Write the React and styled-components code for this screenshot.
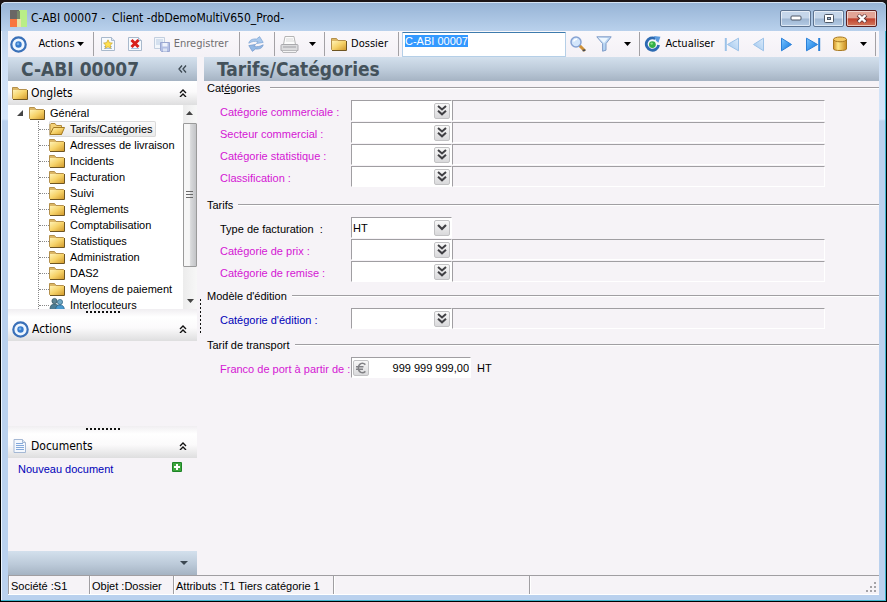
import React from "react";
import styled, { createGlobalStyle, css } from "styled-components";

const ui = '"DejaVu Sans Condensed", "DejaVu Sans", sans-serif';
const form = '"Liberation Sans", Arial, sans-serif';

const GlobalStyle = createGlobalStyle`
  * { box-sizing: border-box; }
  body { margin: 0; background: #1c1517; color: #000; font: 11px/14px ${form}; }
  button, input, select { font: inherit; color: inherit; margin: 0; }
  button { background: none; border: 0; padding: 0; white-space: nowrap; }
  svg { display: block; flex: none; }
  ul { list-style: none; margin: 0; padding: 0; }
`;

/* ---------- window ---------- */
const Window = styled.div`
  display: flex;
  flex-direction: column;
  min-height: 100vh;
  border: 1px solid #000;
  border-top: 2px solid #1c1517;
  border-radius: 6px 6px 0 0;
  padding: 0 7px 6px;
  background: linear-gradient(#b4cbe6 0, #cfe0f6 60px, #d4e5fa 117px, #bad1ee 119px, #bad1ee 100%);
  box-shadow: inset -1px -1px #3fb4cd, inset 1px 0 #eef6ff;
`;
const TitleBar = styled.header`
  display: flex;
  align-items: center;
  height: 29px;
  margin: 0 -7px;
  padding: 2px 9px 0;
  border-radius: 5px 5px 0 0;
  border-top: 1px solid #d5e4f4;
  background: linear-gradient(#97b4d6, #b9d1ec);
`;
const Title = styled.h1`
  flex: 1;
  margin: 0 0 0 4px;
  font: 12px/16px ${ui};
  white-space: pre;
`;
const Captions = styled.div`
  display: flex;
  gap: 2px;
`;
const CaptionButton = styled.button`
  display: grid;
  place-items: center;
  width: 31px;
  height: 17px;
  border: 1px solid #5d7390;
  border-radius: 2px;
  box-shadow: inset 0 0 0 1px #ffffff90;
  background: linear-gradient(#c5d6ea 0 48%, #9eb6d2 52%, #b4cbe5);
  ${(p) => p.$close && css`
    border-color: #5b1f21;
    background: linear-gradient(#e2a496 0 46%, #c0412d 52%, #d27a5e);
  `}
`;
const Client = styled.div`
  flex: 1;
  display: flex;
  flex-direction: column;
  background: #f6f3f7;
`;

/* ---------- toolbar ---------- */
const Toolbar = styled.div`
  display: flex;
  align-items: center;
  height: 26px;
  font: 11px/14px ${ui};
  background: linear-gradient(#faf8fb, #f4f1f6);
`;
const Tool = styled.button`
  display: flex;
  align-items: center;
  justify-content: center;
  gap: ${(p) => p.$gap || 4}px;
  flex: none;
  width: ${(p) => p.$w}px;
  height: 24px;
  &:disabled { color: #6f6d70; }
`;
const Separator = styled.span`
  flex: none;
  width: 1px;
  height: 24px;
  margin-left: ${(p) => p.$before || 0}px;
  background: #a3a1a5;
`;
const SearchBox = styled.input`
  flex: 0 1 164px;
  min-width: 60px;
  height: 25px;
  margin-left: 3px;
  padding: 0 2px 6px;
  border: 1px solid #b5cfe7;
  border-top-color: #3d7bad;
  border-radius: 1px;
  font: 11px/14px ${form};
  outline: 0;
  &::selection { background: #3399ff; color: #fff; }
`;

/* ---------- layout ---------- */
const Body = styled.div`
  flex: 1;
  display: flex;
`;
const Sidebar = styled.aside`
  flex: none;
  display: flex;
  flex-direction: column;
  width: 189px;
`;
const band = css`
  display: flex;
  align-items: center;
  height: 24px;
  background: linear-gradient(#d3e0ed, #bccad9 55%, #a5b3c3);
`;
const Band = styled.div`
  ${band}
  justify-content: space-between;
  padding: 0 10px 0 13px;
`;
const BandTitle = styled.h2`
  margin: 0;
  font: bold 19px/24px ${ui};
  color: #44525b;
`;
const FootBand = styled.div`
  ${band}
  justify-content: flex-end;
  padding-right: 9px;
`;
const PanelHeader = styled.div`
  display: flex;
  align-items: center;
  gap: 3px;
  height: 24px;
  padding: 0 10px 0 4px;
  background: linear-gradient(#fff, #fbfafb 45%, #dededf);
`;
const PanelTitle = styled.h3`
  flex: 1;
  margin: 0;
  font: 12px/16px ${ui};
`;
const PanelBody = styled.div`
  display: flex;
  align-items: flex-start;
  justify-content: space-between;
  flex: ${(p) => (p.$h ? `0 0 ${p.$h}px` : "1")};
  padding: 4px 15px 0 10px;
`;
const Link = styled.a`
  color: #0000b8;
  text-decoration: none;
`;
const Splitter = styled.div`
  display: flex;
  justify-content: center;
  height: 8px;
  padding-top: 2px;
  background: linear-gradient(#f0eef1, #fff);
  &::before {
    content: "";
    width: 34px;
    height: 2px;
    background: repeating-linear-gradient(90deg, #111 0 2px, transparent 2px 4px);
  }
`;
const Divider = styled.div`
  flex: none;
  display: flex;
  align-items: center;
  justify-content: center;
  width: 7px;
  &::before {
    content: "";
    width: 1px;
    height: 34px;
    background: repeating-linear-gradient(#111 0 2px, transparent 2px 4px);
  }
`;

/* ---------- tree ---------- */
const TreePane = styled.div`
  display: flex;
  height: 204px;
  background: #fff;
`;
const Tree = styled.div`
  flex: 1;
  overflow: hidden;
  padding-left: 8px;
`;
const TreeRoot = styled.div`
  display: flex;
  align-items: center;
  gap: 5px;
  height: 16px;
`;
const Branch = styled.ul`
  margin-left: 22px;
  border-left: 1px dotted #888;
`;
const Leaf = styled.li`
  display: flex;
  align-items: center;
  height: 16px;
  &::before {
    content: "";
    width: 10px;
    border-top: 1px dotted #888;
  }
`;
const LeafButton = styled.button`
  display: flex;
  align-items: center;
  gap: 3px;
  height: 16px;
  padding-right: 1px;
  border-radius: 2px;
  ${(p) => p.$on && css`
    background: linear-gradient(#fbfbfb, #e9e9e9);
    box-shadow: inset 0 0 0 1px #d9d9d9;
  `}
`;
const LeafText = styled.span`
  padding: 0 2px;
`;
const Scroll = styled.div`
  display: flex;
  flex-direction: column;
  align-items: center;
  justify-content: space-between;
  flex: none;
  width: 14px;
  padding: 6px 0;
  background: linear-gradient(90deg, #ececec, #f7f7f7);
`;
const Thumb = styled.div`
  display: grid;
  place-items: center;
  width: 14px;
  height: 144px;
  margin: 0 0 24px;
  border: 1px solid #9a9a9a;
  border-radius: 1px;
  background: linear-gradient(90deg, #f6f6f6 0 45%, #d9dadc 55%, #c3c4c7);
`;

/* ---------- form ---------- */
const Main = styled.main`
  flex: 1;
  min-width: 0;
`;
const Group = styled.section`
  padding-bottom: ${(p) => p.$after || 0}px;
`;
const Legend = styled.h3`
  display: flex;
  align-items: center;
  gap: ${(p) => p.$gap || 5}px;
  margin: 0 0 5px;
  padding-left: 3px;
  font: 11px/14px ${form};
  white-space: nowrap;
  &::after {
    content: "";
    flex: 1;
    height: 1px;
    background: #a09ea2;
    border-bottom: 1px solid #fff;
  }
`;
const Row = styled.div`
  display: flex;
  height: 22px;
  padding: 0 54px 0 16px;
`;
const Label = styled.label`
  flex: none;
  width: 131px;
  padding-top: 5px;
  white-space: pre;
  color: ${(p) => p.$color || "#000"};
`;
const sunken = css`
  border: 1px solid #fff;
  border-top-color: #a09ea2;
  border-left-color: #a09ea2;
`;
const Box = styled.div`
  ${sunken}
  flex: none;
  display: flex;
  align-items: center;
  width: ${(p) => p.$w || 101}px;
  height: 21px;
  padding: 0 1px;
  background: #fff;
`;
const Field = styled.input`
  flex: 1;
  width: 0;
  padding: 0;
  border: 0;
  background: none;
  outline: 0;
  text-align: ${(p) => p.$align || "left"};
`;
const Choice = styled.select`
  appearance: none;
  flex: 1;
  width: 0;
  padding: 0;
  border: 0;
  background: none;
  outline: 0;
`;
const SmallButton = styled.button`
  display: grid;
  place-items: center;
  flex: none;
  width: 16px;
  height: 16px;
  border: 1px solid #c2c2c4;
  border-radius: 2px;
  background: linear-gradient(#f8f8f8, #d9d9db);
`;
const Description = styled.output`
  ${sunken}
  flex: 1;
  min-width: 0;
  height: 21px;
`;
const Unit = styled.span`
  padding: 4px 0 0 6px;
`;

/* ---------- status bar ---------- */
const Status = styled.footer`
  display: flex;
  height: 20px;
  border-bottom: 1px solid #fff;
`;
const StatusCell = styled.div`
  display: flex;
  align-items: center;
  justify-content: ${(p) => (p.$w ? "flex-start" : "flex-end")};
  flex: ${(p) => (p.$w ? `0 0 ${p.$w}px` : "1")};
  padding: 1px 2px 0;
  border-top: 1px solid #a09ea2;
  border-left: 1px solid #a09ea2;
  box-shadow: inset 1px 0 #fff;
  white-space: nowrap;
`;

/* ---------- icons ---------- */
const Svg = ({ w = 16, h = 16, children }) => (
  <svg width={w} height={h} viewBox={`0 0 ${w} ${h}`} aria-hidden="true">{children}</svg>
);
const Defs = styled.svg`
  position: absolute;
`;
const Gradients = () => (
  <Defs width="0" height="0" aria-hidden="true">
    <defs>
      <linearGradient id="gold" x1="0" y1="0" x2="1" y2="1">
        <stop offset="0" stopColor="#fff2b4" /><stop offset=".5" stopColor="#f6d268" /><stop offset="1" stopColor="#d29b2e" />
      </linearGradient>
      <linearGradient id="blue" x1="0" y1="0" x2="1" y2="1">
        <stop offset="0" stopColor="#7cc6ff" /><stop offset="1" stopColor="#0a73de" />
      </linearGradient>
      <linearGradient id="pale" x1="0" y1="0" x2="1" y2="1">
        <stop offset="0" stopColor="#dcebfa" /><stop offset="1" stopColor="#9fc6ee" />
      </linearGradient>
      <linearGradient id="cyl" x1="0" y1="0" x2="1" y2="0">
        <stop offset="0" stopColor="#d0912a" /><stop offset=".35" stopColor="#ffe784" /><stop offset="1" stopColor="#c98a1e" />
      </linearGradient>
    </defs>
  </Defs>
);
const Logo = () => (
  <Svg w={17} h={17}>
    <rect width="9" height="9" fill="#6a6765" /><rect x="9" width="8" height="17" fill="#b9ee87" />
    <rect x="7" y="1" width="3" height="8" fill="#77886a" />
    <rect y="9" width="7" height="8" fill="#f8763f" /><rect x="7" y="9" width="4" height="8" fill="#e8e3a8" />
  </Svg>
);
const Target = () => (
  <Svg w={17} h={17}>
    <circle cx="8.5" cy="8.5" r="7.2" fill="#eef6ff" stroke="#3a70b8" strokeWidth="2.2" />
    <circle cx="8.5" cy="8.5" r="3.2" fill="#3579cb" /><circle cx="8" cy="7.9" r="1.4" fill="#72aee8" />
  </Svg>
);
const Caret = ({ color = "#000", w = 7 }) => (
  <Svg w={w} h={4}><path d={`M0 0H${w}L${w / 2} 4Z`} fill={color} /></Svg>
);
const Page = () => (
  <>
    <path d="M1.5 1.5H11.5L14.5 4.5V14.5H1.5Z" fill="#f7fafe" stroke="#a9b9cc" />
    <path d="M11.5 1.5V4.5H14.5" fill="#dce7f3" stroke="#a9b9cc" />
  </>
);
const NewIcon = () => (
  <Svg><Page /><path d="M4 12.5H12M4 10.5H12" stroke="#a8c2e0" />
    <path d="M8 3.8L9.4 6.7L12.4 7.1L10.2 9.2L10.8 12.3L8 10.8L5.2 12.3L5.8 9.2L3.6 7.1L6.6 6.7Z" fill="#ffe14f" stroke="#c9a22a" strokeWidth=".7" /></Svg>
);
const DeleteIcon = () => (
  <Svg><Page /><path d="M4 12.5H12" stroke="#a8c2e0" />
    <path d="M4.5 4L11.5 11M11.5 4L4.5 11" stroke="#d8201c" strokeWidth="3" /></Svg>
);
const SaveIcon = () => (
  <Svg>
    <path d="M.5 1.5H10.5V12.5H.5Z" fill="#f2f6fb" stroke="#c3cfdf" />
    <path d="M2 4H9M2 6H9M2 8H7" stroke="#b8cbe3" />
    <path d="M6.5 6.5H15.5V15.5H7.5L6.5 14.5Z" fill="#b3bfe4" stroke="#9aa7d0" />
    <path d="M8.5 7H13.5V10.5H8.5Z" fill="#eef2fb" /><path d="M9 12.5H13V15.5H9Z" fill="#dde4f4" />
  </Svg>
);
const RefreshIcon = () => (
  <Svg>
    <path d="M.8 7.2C1.4 4.2 4 2.6 8.6 3L11.6 .6L15.2 6.4L8.4 7.6L10 5.6C6.6 5 4 5.4 .8 7.2Z" fill="#a9c8ec" stroke="#7ba3d3" strokeWidth=".7" />
    <path d="M15.2 8.8C14.6 11.8 12 13.4 7.4 13L4.4 15.4L.8 9.6L7.6 8.4L6 10.4C9.4 11 12 10.6 15.2 8.8Z" fill="#93b8e4" stroke="#7097cc" strokeWidth=".7" />
  </Svg>
);
const PrinterIcon = () => (
  <Svg w={19} h={17}>
    <path d="M5 .5H14L15.5 8.5H3.5Z" fill="#fcfcfc" stroke="#b5b5b5" />
    <path d="M6 3H13M6 5H14" stroke="#dadada" />
    <path d="M1 9.5Q1 8.5 2 8.5H17Q18 8.5 18 9.5V14.5H1Z" fill="#dcdcde" stroke="#a9a9ad" />
    <path d="M3 11H16" stroke="#a0a0a5" /><path d="M2 14.5H17L16 16.5H3Z" fill="#f4f4f4" stroke="#b9b9bc" />
  </Svg>
);
const Folder = ({ open }) => open ? (
  <Svg>
    <path d="M1 13.5V3.5L2 2.5H6L7.5 4.5H12.5V13.5Z" fill="#f3d177" stroke="#b0883a" />
    <path d="M1 13.5L4.5 6.5H15.5L12.5 13.5Z" fill="url(#gold)" stroke="#a47a22" />
  </Svg>
) : (
  <Svg>
    <path d="M.5 13.5V2.5H5.5L7 4.5H14.5V13.5Z" fill="#dcb765" stroke="#b4904c" />
    <path d="M1 5H15V14H1Z" fill="url(#gold)" /><path d="M1 14.5H15.5V5" fill="none" stroke="#6e5522" />
  </Svg>
);
const SearchIcon = () => (
  <Svg>
    <path d="M10 10L14 14" stroke="#d09238" strokeWidth="3" strokeLinecap="round" /><path d="M12.6 14.6L15.4 14" stroke="#454a54" strokeWidth="1.6" />
    <circle cx="6" cy="6" r="5" fill="#d3e6fb" stroke="#86a2d2" strokeWidth="1.5" /><path d="M3.5 5.5Q4.5 3 7 3.2" stroke="#fff" strokeWidth="1.6" fill="none" />
  </Svg>
);
const FilterIcon = () => (
  <Svg><path d="M.8 .8H15.2L10 7.6V14.2L6.6 15.2V7.6Z" fill="url(#pale)" stroke="#7f9cc8" /><path d="M3 2H12L8 7Z" fill="#eef7ff" /></Svg>
);
const UpdateIcon = () => (
  <Svg w={17}>
    <path d="M11.5 2.6A6.2 6.2 0 1 0 14.6 9" fill="none" stroke="#2c6ab2" strokeWidth="2.8" />
    <path d="M10 0L16.4 .8L14.4 6.8L12 4.8Z" fill="#5a9ade" /><circle cx="8.4" cy="8.6" r="3.4" fill="#35b046" /><circle cx="7.6" cy="7.6" r="1.2" fill="#86df83" />
  </Svg>
);
const Nav = ({ dir, bar, on }) => (
  <Svg w={16} h={15}>
    <g transform={dir < 0 ? "translate(16 0) scale(-1 1)" : undefined} fill={on ? "url(#blue)" : "url(#pale)"} stroke={on ? "#2a80d8" : "#9cc2e8"}>
      <path d={bar ? "M1.5 1.2L12.5 7.5L1.5 13.8Z" : "M3.5 1.2L13.5 7.5L3.5 13.8Z"} />
      {bar && <path d="M14.2 1V14" strokeWidth="2" />}
    </g>
  </Svg>
);
const Database = () => (
  <Svg>
    <path d="M1.5 3.5V13C1.5 15 14.5 15 14.5 13V3.5Z" fill="url(#cyl)" stroke="#a87820" />
    <ellipse cx="8" cy="3.4" rx="6.5" ry="2.4" fill="#f4ca64" stroke="#a87820" />
  </Svg>
);
const Chevrons = ({ left }) => left ? (
  <Svg w={9} h={8}><path d="M4 .5L1 4L4 7.5M8 .5L5 4L8 7.5" fill="none" stroke="#3c4852" strokeWidth="1.3" /></Svg>
) : (
  <Svg w={8} h={8}><path d="M1 4L4 1L7 4M1 8L4 5L7 8" fill="none" stroke="#111" strokeWidth="1.4" /></Svg>
);
const Down = ({ double }) => double ? (
  <Svg w={10} h={11}><path d="M1 1L5 4.5L9 1M1 5.8L5 9.3L9 5.8" fill="none" stroke="#404044" strokeWidth="2" /></Svg>
) : (
  <Svg w={10} h={7}><path d="M1 1L5 5L9 1" fill="none" stroke="#404044" strokeWidth="2.2" /></Svg>
);
const DocIcon = () => (
  <Svg><path d="M2 1.5H10.5L13.5 4.5V14.5H2Z" fill="#f4f8fe" stroke="#a5b8d4" /><path d="M4 5.5H11M4 7.5H12M4 9.5H12M4 11.5H12" stroke="#83a8da" /><path d="M10.5 1.5V4.5H13.5" fill="#dce7f3" stroke="#a5b8d4" /></Svg>
);
const People = () => (
  <Svg>
    <circle cx="5.5" cy="4" r="2.6" fill="#5f8595" stroke="#31515f" strokeWidth=".7" /><path d="M1 13C1 8 3 7 5.5 7S10 8 10 13Z" fill="#4d7d95" stroke="#31515f" strokeWidth=".7" />
    <circle cx="11" cy="5" r="2.6" fill="#70a8c4" stroke="#31617c" strokeWidth=".7" /><path d="M6.5 14.5C6.5 9 8.5 8 11 8S15.5 9 15.5 14.5Z" fill="#4a99cd" stroke="#235b83" strokeWidth=".7" />
  </Svg>
);
const Plus = () => (
  <Svg w={10} h={10}><rect width="10" height="10" rx="1" fill="#1e8427" /><rect x="1" y="1" width="8" height="8" fill="#3fa63e" /><path d="M5 2V8M2 5H8" stroke="#fff" strokeWidth="2" /></Svg>
);
const Euro = () => (
  <Svg w={12} h={12}><path d="M10.4 2.6C7.4 -.2 3.4 1.6 3.4 6S7.4 12.2 10.4 9.4M1 4.8H8.5M1 7.2H8" fill="none" stroke="#808084" strokeWidth="1.5" /></Svg>
);
const Grip = () => (
  <Svg w={12} h={12}><path d="M9 2h2v2H9zM9 6h2v2H9zM5 6h2v2H5zM9 10h2v2H9zM5 10h2v2H5zM1 10h2v2H1z" fill="#a5a3a7" /></Svg>
);

const LEAVES = ["Tarifs/Catégories", "Adresses de livraison", "Incidents", "Facturation", "Suivi", "Règlements",
  "Comptabilisation", "Statistiques", "Administration", "DAS2", "Moyens de paiement", "Interlocuteurs"];
const PINK = "#d416d4";

const Lookup = ({ id, label, color = PINK }) => (
  <Row>
    <Label htmlFor={id} $color={color}>{label}</Label>
    <Box>
      <Field id={id} />
      <SmallButton type="button" aria-label={`Rechercher ${label}`}><Down double /></SmallButton>
    </Box>
    <Description htmlFor={id} />
  </Row>
);
const Panel = ({ icon, title }) => (
  <PanelHeader>{icon}<PanelTitle>{title}</PanelTitle><button type="button" aria-label={`Réduire ${title}`}><Chevrons /></button></PanelHeader>
);

export default function App() {
  const search = React.useRef(null);
  React.useEffect(() => {
    search.current.focus();
    search.current.select();
  }, []);
  return (
    <Window>
      <GlobalStyle />
      <Gradients />
      <TitleBar>
        <Logo />
        <Title>{"C-ABI 00007 -  Client -dbDemoMultiV650_Prod-"}</Title>
        <Captions>
          <CaptionButton aria-label="Réduire"><Svg w={12} h={6}><rect x="1" y="1" width="10" height="4" rx="1" fill="#fff" stroke="#4c5766" /></Svg></CaptionButton>
          <CaptionButton aria-label="Agrandir"><Svg w={12} h={9}><rect x="1.5" y=".5" width="9" height="8" rx="1" fill="#fff" stroke="#4c5766" /><rect x="4.5" y="3.5" width="3" height="2" fill="#9eb6d2" stroke="#4c5766" /></Svg></CaptionButton>
          <CaptionButton $close aria-label="Fermer"><Svg w={12} h={9}><path d="M2 1L10 8M10 1L2 8" stroke="#5b3436" strokeWidth="4" /><path d="M2.5 1.2L9.5 7.8M9.5 1.2L2.5 7.8" stroke="#fff" strokeWidth="2.4" /></Svg></CaptionButton>
        </Captions>
      </TitleBar>
      <Client>
        <Toolbar role="toolbar">
          <Tool $w={21} aria-label="Menu"><Target /></Tool>
          <Tool $w={64} $gap={2}>Actions<Caret /></Tool>
          <Separator />
          <Tool $w={28} aria-label="Nouveau"><NewIcon /></Tool>
          <Tool $w={26} aria-label="Supprimer"><DeleteIcon /></Tool>
          <Tool $w={86} disabled><SaveIcon />Enregistrer</Tool>
          <Separator $before={5} />
          <Tool $w={31} aria-label="Synchroniser"><RefreshIcon /></Tool>
          <Separator $before={3} />
          <Tool $w={28} aria-label="Imprimer"><PrinterIcon /></Tool>
          <Tool $w={18} aria-label="Options d'impression"><Caret /></Tool>
          <Separator $before={3} />
          <Tool $w={69}><Folder />Dossier</Tool>
          <Separator $before={4} />
          <SearchBox ref={search} aria-label="Recherche" defaultValue="C-ABI 00007" />
          <Tool $w={23} aria-label="Rechercher"><SearchIcon /></Tool>
          <Tool $w={30} aria-label="Filtrer"><FilterIcon /></Tool>
          <Tool $w={17} aria-label="Options de filtre"><Caret /></Tool>
          <Separator $before={3} />
          <Tool $w={79}><UpdateIcon />Actualiser</Tool>
          <Tool $w={26} aria-label="Premier"><Nav dir={-1} bar /></Tool>
          <Tool $w={28} aria-label="Précédent"><Nav dir={-1} /></Tool>
          <Tool $w={26} aria-label="Suivant"><Nav dir={1} on /></Tool>
          <Tool $w={27} aria-label="Dernier"><Nav dir={1} bar on /></Tool>
          <Tool $w={28} aria-label="Base de données"><Database /></Tool>
          <Tool $w={19} aria-label="Options de base"><Caret /></Tool>
          <Separator $before={2} />
        </Toolbar>
        <Body>
          <Sidebar>
            <Band><BandTitle>C-ABI 00007</BandTitle><button type="button" aria-label="Replier le volet"><Chevrons left /></button></Band>
            <Panel icon={<Folder />} title="Onglets" />
            <TreePane>
              <Tree>
                <TreeRoot>
                  <Svg w={8} h={8}><path d="M7 1V7H1Z" fill="#444" /></Svg>
                  <Folder />
                  <span>Général</span>
                </TreeRoot>
                <Branch>
                  {LEAVES.map((t, i) => (
                    <Leaf key={t}>
                      <LeafButton type="button" $on={i === 0}>
                        {t === "Interlocuteurs" ? <People /> : <Folder open={i === 0} />}
                        <LeafText>{t}</LeafText>
                      </LeafButton>
                    </Leaf>
                  ))}
                </Branch>
              </Tree>
              <Scroll>
                <Svg w={8} h={4}><path d="M0 4H7L3.5 0Z" fill="#444" /></Svg>
                <Thumb><Svg w={8} h={8}><path d="M0 .5H7M0 3.5H7M0 6.5H7" stroke="#6a6a6a" /></Svg></Thumb>
                <Caret color="#444" />
              </Scroll>
            </TreePane>
            <Splitter />
            <Panel icon={<Target />} title="Actions" />
            <PanelBody $h={85} />
            <Splitter />
            <Panel icon={<DocIcon />} title="Documents" />
            <PanelBody>
              <Link href="#nouveau">Nouveau document</Link>
              <button type="button" aria-label="Ajouter un document"><Plus /></button>
            </PanelBody>
            <FootBand><Caret color="#3c4852" w={8} /></FootBand>
          </Sidebar>
          <Divider />
          <Main>
            <Band><BandTitle>Tarifs/Catégories</BandTitle></Band>
            <Group $after={10}>
              <Legend $gap={10}><span>Cat<u>é</u>gories</span></Legend>
              <Lookup id="cc" label="Catégorie commerciale :" />
              <Lookup id="sc" label="Secteur commercial :" />
              <Lookup id="cs" label="Catégorie statistique :" />
              <Lookup id="cl" label="Classification :" />
            </Group>
            <Group $after={6}>
              <Legend>Tarifs</Legend>
              <Row>
                <Label htmlFor="tf">{"Type de facturation  :"}</Label>
                <Box>
                  <Choice id="tf" defaultValue="HT"><option>HT</option><option>TTC</option></Choice>
                  <SmallButton type="button" aria-label="Ouvrir la liste"><Down /></SmallButton>
                </Box>
              </Row>
              <Lookup id="cp" label="Catégorie de prix :" />
              <Lookup id="cr" label="Catégorie de remise :" />
            </Group>
            <Group $after={8}>
              <Legend>Modèle d'édition</Legend>
              <Lookup id="ce" label="Catégorie d'édition :" color="#0000b8" />
            </Group>
            <Group>
              <Legend>Tarif de transport</Legend>
              <Row>
                <Label htmlFor="fp" $color={PINK}>Franco de port à partir de :</Label>
                <Box $w={120}>
                  <SmallButton type="button" aria-label="Devise"><Euro /></SmallButton>
                  <Field id="fp" $align="right" defaultValue="999 999 999,00" />
                </Box>
                <Unit>HT</Unit>
              </Row>
            </Group>
          </Main>
        </Body>
        <Status>
          <StatusCell $w={81}>Société :S1</StatusCell>
          <StatusCell $w={84}>Objet :Dossier</StatusCell>
          <StatusCell $w={160}>Attributs :T1 Tiers catégorie 1</StatusCell>
          <StatusCell $w={196} />
          <StatusCell><Grip /></StatusCell>
        </Status>
      </Client>
    </Window>
  );
}
